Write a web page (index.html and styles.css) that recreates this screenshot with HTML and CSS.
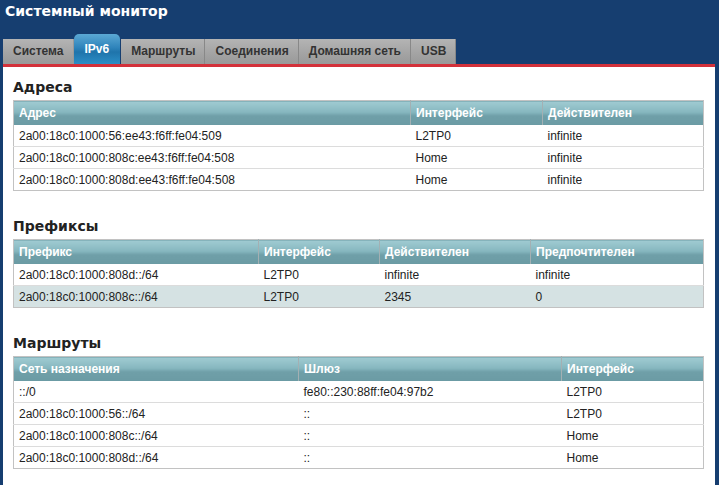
FILE: index.html
```html
<!DOCTYPE html>
<html lang="ru">
<head>
<meta charset="utf-8">
<title>Системный монитор</title>
<link rel="stylesheet" href="styles.css">
</head>
<body>
<div class="page">
  <h1 class="title">Системный монитор</h1>
  <nav class="tabs">
    <span class="tab">Система</span>
    <span class="tab active">IPv6</span>
    <span class="tab">Маршруты</span>
    <span class="tab">Соединения</span>
    <span class="tab">Домашняя сеть</span>
    <span class="tab">USB</span>
  </nav>
  <div class="redbar"></div>
  <main class="panel">
    <section class="section first">
      <h2 class="heading">Адреса</h2>
      <table class="grid">
        <colgroup><col class="c397"><col class="c132"><col></colgroup>
        <thead><tr><th>Адрес</th><th>Интерфейс</th><th>Действителен</th></tr></thead>
        <tbody>
          <tr><td>2a00:18c0:1000:56:ee43:f6ff:fe04:509</td><td>L2TP0</td><td>infinite</td></tr>
          <tr><td>2a00:18c0:1000:808c:ee43:f6ff:fe04:508</td><td>Home</td><td>infinite</td></tr>
          <tr><td>2a00:18c0:1000:808d:ee43:f6ff:fe04:508</td><td>Home</td><td>infinite</td></tr>
        </tbody>
      </table>
    </section>
    <section class="section">
      <h2 class="heading">Префиксы</h2>
      <table class="grid">
        <colgroup><col class="c245"><col class="c121"><col class="c151"><col></colgroup>
        <thead><tr><th>Префикс</th><th>Интерфейс</th><th>Действителен</th><th>Предпочтителен</th></tr></thead>
        <tbody>
          <tr><td>2a00:18c0:1000:808d::/64</td><td>L2TP0</td><td>infinite</td><td>infinite</td></tr>
          <tr class="hl"><td>2a00:18c0:1000:808c::/64</td><td>L2TP0</td><td>2345</td><td>0</td></tr>
        </tbody>
      </table>
    </section>
    <section class="section">
      <h2 class="heading">Маршруты</h2>
      <table class="grid">
        <colgroup><col class="c285"><col class="c263"><col></colgroup>
        <thead><tr><th>Сеть назначения</th><th>Шлюз</th><th>Интерфейс</th></tr></thead>
        <tbody>
          <tr><td>::/0</td><td>fe80::230:88ff:fe04:97b2</td><td>L2TP0</td></tr>
          <tr><td>2a00:18c0:1000:56::/64</td><td>::</td><td>L2TP0</td></tr>
          <tr><td>2a00:18c0:1000:808c::/64</td><td>::</td><td>Home</td></tr>
          <tr><td>2a00:18c0:1000:808d::/64</td><td>::</td><td>Home</td></tr>
        </tbody>
      </table>
    </section>
  </main>
</div>
</body>
</html>
```

FILE: styles.css
```css
html, body {
  margin: 0;
  padding: 0;
  background: #163e70;
  height: 100%;
}
.page {
  padding: 0 4px 0 3px;
  font-family: "Liberation Sans", Arial, sans-serif;
  color: #222;
}
.title {
  margin: 0;
  padding: 1px 0 0 2px;
  height: 34px;
  box-sizing: border-box;
  font-family: "DejaVu Sans", Verdana, sans-serif;
  font-weight: bold;
  font-size: 14px;
  line-height: 20px;
  color: #fff;
}
.tabs {
  display: flex;
  align-items: flex-end;
  height: 30px;
}
.tab {
  height: 25px;
  line-height: 25px;
  padding: 0 9px 0 10px;
  box-sizing: border-box;
  font-size: 12px;
  font-weight: bold;
  color: #333;
  background: linear-gradient(#b4b4b4, #a3a3a3 60%, #999);
  border-right: 1px solid #888;
}
.tab:first-child {
  border-right: 1px solid #999;
}
.tab.active {
  height: 30px;
  line-height: 30px;
  padding: 0 11px;
  color: #fff;
  border-right: none;
  border-radius: 5px 5px 0 0;
  background: linear-gradient(#5ba8d4, #2f84bb 45%, #1f74ab 60%, #2b8ec6);
  margin-right: 1px;
}
.redbar {
  height: 3px;
  background: #d3313a;
}
.panel {
  background: #fff;
  padding: 0 11px 20px 10px;
  min-height: 430px;
}
.section {
  padding-top: 26px;
}
.section.first {
  padding-top: 11px;
}
.heading {
  margin: 0 0 4px 0;
  font-family: "DejaVu Sans", Verdana, sans-serif;
  font-size: 14px;
  font-weight: bold;
  line-height: 18px;
  color: #222;
}
.grid {
  width: 100%;
  border-collapse: collapse;
  border: 1px solid #c2c2c2;
  font-size: 12px;
  table-layout: fixed;
}
.c397 { width: 397px; }
.c132 { width: 132px; }
.c245 { width: 245px; }
.c121 { width: 121px; }
.c151 { width: 151px; }
.c285 { width: 285px; }
.c263 { width: 263px; }
.grid th {
  height: 24px;
  padding: 0 0 0 5px;
  text-align: left;
  font-weight: bold;
  color: #fff;
  background: linear-gradient(#a0cbd2, #86b7bf 45%, #6f9fa8 60%, #6b9ba4);
  border-left: 1px solid #a3b0b3;
}
.grid th:first-child {
  border-left: none;
}
.grid td {
  height: 21px;
  padding: 0 0 0 5px;
  border-top: 1px solid #dcdcdc;
  color: #222;
  white-space: nowrap;
}
.grid tbody tr:first-child td {
  border-top: none;
}
.grid tr.hl td {
  background: #d5e2e3;
}
```
